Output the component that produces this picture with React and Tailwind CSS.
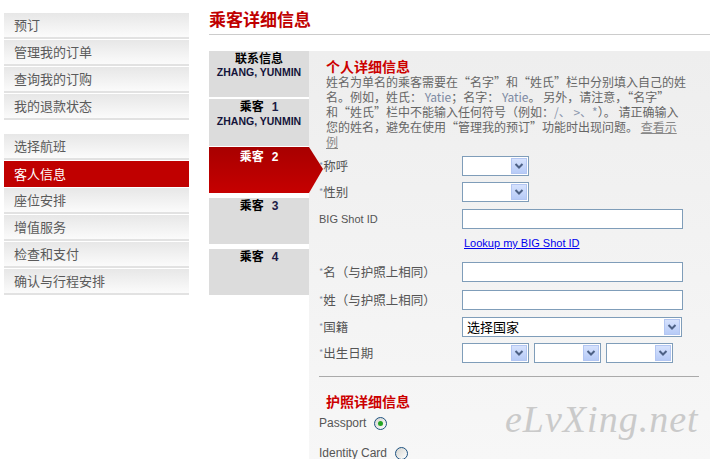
const CJK = '"Noto Sans CJK SC", "Liberation Sans", sans-serif';
const LAT = '"Liberation Sans", "Noto Sans CJK SC", sans-serif';

const navGroups = [
  ['预订', '管理我的订单', '查询我的订购', '我的退款状态'],
  ['选择航班', '客人信息', '座位安排', '增值服务', '检查和支付', '确认与行程安排'],
];

const tabs = [
  { label: '联系信息', name: 'ZHANG, YUNMIN', cls: 'h-[46px] mb-[2px]' },
  { label: '乘客', num: '1', name: 'ZHANG, YUNMIN', cls: 'h-[47px] mb-[1px]' },
  { label: '乘客', num: '2', active: true, cls: 'h-[46px] mb-[5px]' },
  { label: '乘客', num: '3', cls: 'h-[46px] mb-[5px]' },
  { label: '乘客', num: '4', cls: 'h-[46px]' },
];

function Chevron() {
  return (
    <div className="w-[16px] h-[16px] border border-[#b3c6f2] bg-gradient-to-b from-[#d6e2fd] to-[#b7cbf7] flex items-center justify-center">
      <svg width="10" height="8" viewBox="0 0 10 8">
        <path d="M1.5 2 L5 5.5 L8.5 2" fill="none" stroke="#4d6185" strokeWidth="2" />
      </svg>
    </div>
  );
}

function SelectBox({ w, text }) {
  return (
    <div
      className={`${w} h-[20px] border border-[#7f9db9] bg-white flex items-center justify-between pl-[4px] pr-[1px] text-[13px] leading-[18px] text-black`}
      style={{ fontFamily: CJK }}
    >
      <span>{text}</span>
      <Chevron />
    </div>
  );
}

function TextBox() {
  return <div className="w-[221px] h-[20px] border border-[#7f9db9] bg-white" />;
}

function Label({ star = true, children, latin }) {
  return (
    <div
      className={`w-[143px] shrink-0 text-[#555555] leading-[16px] ${latin ? 'text-[11px]' : 'text-[12.5px]'}`}
      style={{ fontFamily: latin ? LAT : CJK }}
    >
      {star && <span className="text-[9px] text-[#8796b0] align-top">*</span>}
      {children}
    </div>
  );
}

function Row({ cls, label, latin, star, children }) {
  return (
    <div className={`flex items-center ${cls}`}>
      <Label latin={latin} star={star}>{label}</Label>
      {children}
    </div>
  );
}

function Radio({ checked }) {
  return (
    <span className="inline-flex w-[13px] h-[13px] rounded-full border border-[#1c5180] bg-gradient-to-br from-[#d4d4cf] to-white items-center justify-center">
      {checked && <span className="w-[5px] h-[5px] rounded-full bg-[#24a524]" />}
    </span>
  );
}

export default function App() {
  return (
    <div className="w-[710px] h-[459px] bg-white flex overflow-hidden" style={{ fontFamily: CJK }}>
      <div className="w-[189px] shrink-0 pl-[4px] pt-[13px]">
        {navGroups.map((group, gi) => (
          <div key={gi} className={gi ? 'mt-[14px]' : ''}>
            {group.map((item) =>
              item === '客人信息' ? (
                <div key={item} className="h-[26px] mb-[1px] bg-[#c00000] text-white text-[13px] leading-[26px] pl-[10px]">
                  {item}
                </div>
              ) : (
                <div
                  key={item}
                  className="h-[26px] mb-[1px] border-b-2 border-[#e2e2e2] bg-gradient-to-b from-[#e7e7e7] to-[#fbfbfb] text-[#5a5a5a] text-[13px] leading-[24px] pl-[10px]"
                >
                  {item}
                </div>
              )
            )}
          </div>
        ))}
      </div>

      <div className="ml-[20px] flex-1 flex flex-col min-h-0">
        <div className="h-[35px] shrink-0 border-b border-[#cccccc] pt-[9px]">
          <h1 className="text-[17px] font-bold leading-[20px] text-[#c00000]">乘客详细信息</h1>
        </div>

        <div className="mt-[16px] flex flex-1 min-h-0">
          <div className="w-[100px] shrink-0 relative z-10">
            {tabs.map((t, i) => (
              <div
                key={i}
                className={`${t.cls} relative text-center ${
                  t.active
                    ? 'bg-gradient-to-b from-[#a80000] to-[#c60000] text-white pt-[2px]'
                    : 'bg-[#dcdcdc] text-black'
                }`}
              >
                <div className="text-[12px] font-bold leading-[14px]">
                  {t.label}
                  {t.num && (
                    <span className={`ml-[8px] ${t.active ? '' : 'text-[#1b1b45]'}`} style={{ fontFamily: LAT }}>
                      {t.num}
                    </span>
                  )}
                </div>
                {t.name && (
                  <div className="text-[10.5px] font-bold leading-[15px] text-[#14143a]" style={{ fontFamily: LAT }}>
                    {t.name}
                  </div>
                )}
                {t.active && (
                  <svg className="absolute left-full top-0" width="14" height="46" viewBox="0 0 14 46">
                    <defs>
                      <linearGradient id="ar" x1="0" y1="0" x2="0" y2="1">
                        <stop offset="0" stopColor="#a80000" />
                        <stop offset="1" stopColor="#c60000" />
                      </linearGradient>
                    </defs>
                    <polygon points="0,0 14,22 0,46" fill="url(#ar)" />
                  </svg>
                )}
              </div>
            ))}
          </div>

          <div className="flex-1 relative bg-gradient-to-b from-[#eeeeee] to-[#f7f7f7] pt-[8px] overflow-hidden">
            <h2 className="pl-[17px] h-[15px] text-[14px] font-bold leading-[15px] text-[#cc0000]">个人详细信息</h2>
            <div className="pl-[17px] text-[12px] leading-[15px] text-[#666666] whitespace-nowrap">
              <div className="h-[15px]">姓名为单名的乘客需要在“名字”和“姓氏”栏中分别填入自己的姓</div>
              <div className="h-[15px]">
                名。例如，姓氏： <span className="text-[#7d8aa3]">Yatie</span>；名字：{' '}
                <span className="text-[#7d8aa3]">Yatie</span>。 另外，请注意，“名字”
              </div>
              <div className="h-[15px]">
                和“姓氏”栏中不能输入任何符号（例如：<span className="text-[#8b97ad]">/、 &gt;、*</span>）。 请正确输入
              </div>
              <div className="h-[15px]">
                您的姓名，避免在使用“管理我的预订”功能时出现问题。{' '}
                <span className="underline text-[#888888]">查看示</span>
              </div>
              <div className="h-[15px]">
                <span className="underline text-[#888888]">例</span>
              </div>
            </div>

            <div className="pl-[10px] mt-[7px]">
              <Row cls="h-[20px]" label="称呼">
                <SelectBox w="w-[67px]" />
              </Row>
              <Row cls="h-[20px] mt-[6px]" label="性别">
                <SelectBox w="w-[67px]" />
              </Row>
              <Row cls="h-[20px] mt-[7px]" label="BIG Shot ID" latin star={false}>
                <TextBox />
              </Row>
              <div className="h-[33px] pl-[145px] pt-[7px] text-[11px] leading-[15px]" style={{ fontFamily: LAT }}>
                <a className="text-[#0000ee] underline">Lookup my BIG Shot ID</a>
              </div>
              <Row cls="h-[20px]" label="名（与护照上相同）">
                <TextBox />
              </Row>
              <Row cls="h-[20px] mt-[8px]" label="姓（与护照上相同）">
                <TextBox />
              </Row>
              <Row cls="h-[20px] mt-[7px]" label="国籍">
                <SelectBox w="w-[220px]" text="选择国家" />
              </Row>
              <Row cls="h-[20px] mt-[6px]" label="出生日期">
                <div className="flex gap-[5px]">
                  <SelectBox w="w-[67px]" />
                  <SelectBox w="w-[67px]" />
                  <SelectBox w="w-[67px]" />
                </div>
              </Row>
              <div className="mt-[13px] mr-[11px] border-t border-[#aaaaaa]" />
            </div>

            <h2 className="pl-[17px] mt-[17px] h-[15px] text-[14px] font-bold leading-[15px] text-[#cc0000]">护照详细信息</h2>
            <div className="pl-[10px] text-[12px] leading-[15px] text-[#555555]" style={{ fontFamily: LAT }}>
              <div className="flex items-center gap-[8px] h-[20px] mt-[4px]">
                <span>Passport</span>
                <Radio checked />
              </div>
              <div className="flex items-center gap-[8px] h-[20px] mt-[10px]">
                <span>Identity Card</span>
                <Radio />
              </div>
            </div>

            <div
              className="absolute left-[196px] top-[346px] text-[38px] leading-[44px] italic tracking-[1px] text-[#cacaca] pointer-events-none"
              style={{ fontFamily: '"Liberation Serif", serif' }}
            >
              eLvXing.net
            </div>
          </div>
        </div>
      </div>
    </div>
  );
}
